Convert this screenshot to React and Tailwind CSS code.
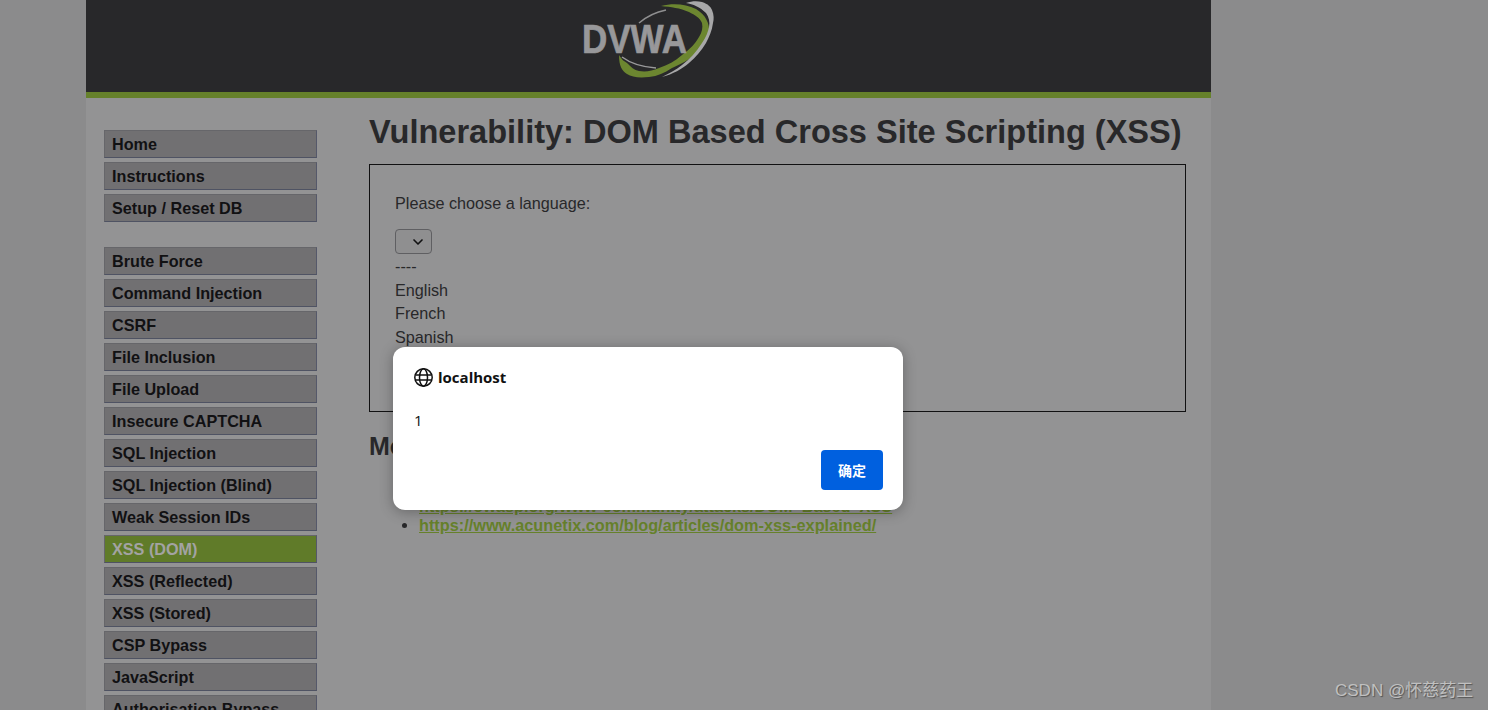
import { ChevronDown } from "lucide-react"

const groups = [
  ["Home", "Instructions", "Setup / Reset DB"],
  [
    "Brute Force",
    "Command Injection",
    "CSRF",
    "File Inclusion",
    "File Upload",
    "Insecure CAPTCHA",
    "SQL Injection",
    "SQL Injection (Blind)",
    "Weak Session IDs",
    "XSS (DOM)",
    "XSS (Reflected)",
    "XSS (Stored)",
    "CSP Bypass",
    "JavaScript",
    "Authorisation Bypass",
  ],
]

function Logo() {
  return (
    <svg width="140" height="84" viewBox="0 0 140 84" className="block">
      <path d="M61 23 C68 17 78 12 88 10" fill="none" stroke="#8f8f90" strokeWidth="1.5" />
      <path d="M44 57 C52 63 64 67 78 68" fill="none" stroke="#9a9a9b" strokeWidth="1.5" />
      <path d="M83 6 C95 3 108 4 118 9 C128 15 132 24 131 33 C129 43 124 47 118 53 C110 61 103 64 94 68 C86 73 80 76 71 77 C60 78 54 77 49 74 C44 71 41 66 41 55 C44 60 46 61 49 63 C53 67 56 70 61 71 C68 72 74 71 81 68 C90 65 97 61 104 55 C112 49 117 44 121 37 C124 32 125 28 124 23 C122 18 117 15 111 12 C102 8 93 7 83 6 Z" fill="#6c8630" />
      <path d="M108 3 C114 1 119 1 124 2 C130 4 133 7 134 10 C136 15 136 19 135 23 C134 31 131 37 128 43 C123 51 118 57 111 63 C104 69 95 74 84 77 C91 73 98 70 104 65 C112 59 118 52 124 43 C128 37 130 32 131 27 C132 22 131 17 128 13 C122 7 115 4 108 3 Z" fill="#a8a8a9" />
      <text x="4" y="53" fontFamily="Liberation Sans, sans-serif" fontWeight="700" fontSize="40" fill="#98989a" stroke="#98989a" strokeWidth="0.7" textLength="105" lengthAdjust="spacingAndGlyphs">DVWA</text>
    </svg>
  )
}

function MenuItem({ label }) {
  const active = label === "XSS (DOM)"
  return (
    <li
      className={`h-7 mb-1 pl-[7px] border border-t-[#66666a] border-l-[#66666a] border-r-[#55586a] border-b-[#4f5363] leading-[27px] text-[16.2px] font-bold ${
        active ? "bg-[#607b29] text-[#a3a3a3] border-[#5a6a80]" : "bg-[#717072] text-[#111113]"
      }`}
    >
      {label}
    </li>
  )
}

export default function App() {
  return (
    <div className="relative h-[710px] overflow-hidden bg-[#8b8b8c] font-['Liberation_Sans',Arial,sans-serif] text-[16.2px] text-[#28282a]">
      <div className="ml-[86px] w-[1125px] h-full bg-[#939394]">
        <header className="h-[98px] bg-[#28282a] border-b-[6px] border-[#66812b] flex justify-center">
          <div className="mr-[2px]">
            <Logo />
          </div>
        </header>

        <div className="flex">
          <nav className="w-[283px] pl-[18px] pt-8">
            {groups.map((group, i) => (
              <ul key={i} className="w-[213px] mb-[25px]">
                {group.map((label) => (
                  <MenuItem key={label} label={label} />
                ))}
              </ul>
            ))}
          </nav>

          <main className="w-[817px]">
            <h1 className="mt-[16px] text-[32.55px] leading-[37px] font-bold whitespace-nowrap">
              Vulnerability: DOM Based Cross Site Scripting (XSS)
            </h1>
            <div className="mt-[13px] h-[248px] border border-[#111112] pl-[25px] pt-[27px]">
              <p className="leading-[22px]">Please choose a language:</p>
              <div className="mt-[15px] w-[37px] h-[25px] rounded-[4px] border border-[#5f5f62] bg-[#8f8f90] flex items-center justify-end pr-[5px]">
                <ChevronDown size={16} strokeWidth={2.5} className="text-[#111112]" />
              </div>
              <div className="mt-[1px] leading-[23.7px]">
                <div>----</div>
                <div>English</div>
                <div>French</div>
                <div>Spanish</div>
              </div>
            </div>
            <h2 className="mt-[20px] text-[25px] leading-7 font-bold">More Information</h2>
            <ul className="mt-[37px] pl-[50px] list-disc leading-[19px] text-[16.3px] font-bold text-[#66812b] underline">
              <li className="marker:text-[#28282a]">https://owasp.org/www-community/attacks/DOM_Based_XSS</li>
              <li className="marker:text-[#28282a]">https://www.acunetix.com/blog/articles/dom-xss-explained/</li>
            </ul>
          </main>
        </div>
      </div>

      {/* browser alert */}
      <div className="absolute left-[393px] top-[347px] w-[510px] h-[163px] rounded-xl bg-white shadow-[0_2px_14px_rgba(0,0,0,0.3)] pl-[21px] pr-[20px] pt-[21px] font-['Open_Sans',sans-serif] text-[#111]">
        <div className="flex items-center gap-[5px]">
          <svg width="19" height="19" viewBox="0 0 19 19" fill="none" stroke="#111" strokeWidth="1.5">
            <circle cx="9.5" cy="9.5" r="8.7" />
            <ellipse cx="9.5" cy="9.5" rx="4" ry="8.7" />
            <path d="M1.4 7h16.2M1.4 12h16.2" />
          </svg>
          <span className="text-[15px] leading-[19px] font-bold">localhost</span>
        </div>
        <p className="mt-[24px] text-[15px] leading-[19px]">1</p>
        <div className="mt-[20px] flex justify-end">
          <button className="w-[62px] h-10 rounded-[4px] bg-[#0060df] text-white text-sm font-bold font-['Noto_Sans_CJK_SC',sans-serif]">
            确定
          </button>
        </div>
      </div>

      <div className="absolute left-[1335px] top-[680px] text-[17px] leading-[22px] text-[#c0c0c0] font-['Liberation_Sans','Noto_Sans_CJK_SC',sans-serif] [text-shadow:1px_1px_1px_#555]">
        CSDN @怀慈药王
      </div>
    </div>
  )
}
